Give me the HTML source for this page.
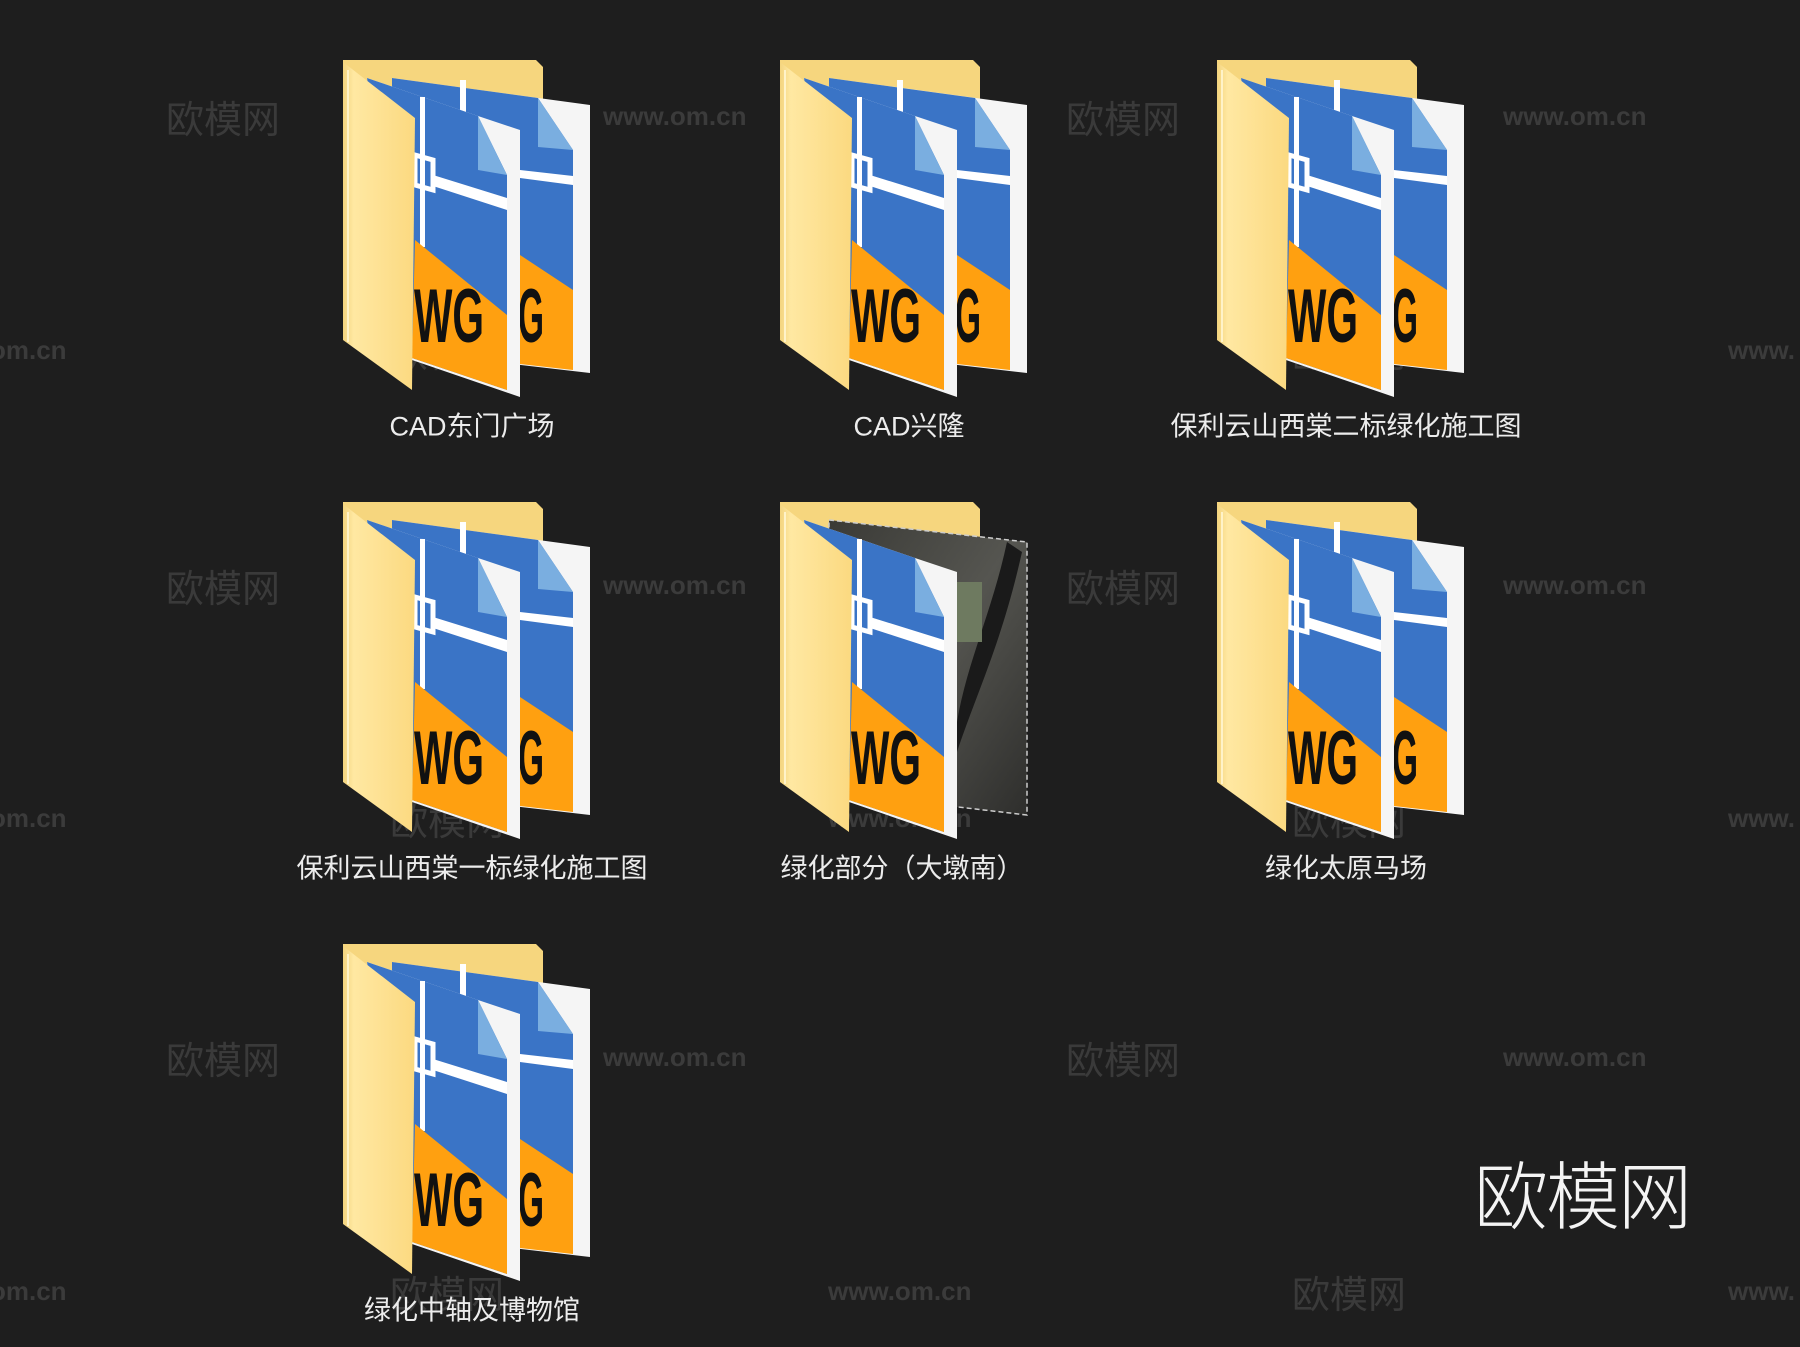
<!DOCTYPE html>
<html><head><meta charset="utf-8"><style>
html,body{margin:0;padding:0;background:#1e1e1e;}
body{width:1800px;height:1347px;position:relative;overflow:hidden;font-family:"Liberation Sans","Noto Sans CJK SC",sans-serif;}
.wm{position:absolute;color:#3a3a3a;font-family:"Noto Sans CJK SC",sans-serif;font-size:38px;line-height:1;white-space:nowrap;transform:translateY(-50%);}
.ww{position:absolute;color:#3b3b3b;font-family:"Liberation Sans",sans-serif;font-weight:bold;font-size:26px;line-height:1;white-space:nowrap;transform:translateY(-50%);}
.f{position:absolute;width:280px;height:400px;}
.lab{position:absolute;color:#ececec;font-family:"Liberation Sans","Noto Sans CJK SC",sans-serif;font-size:27px;line-height:1;white-space:nowrap;transform:translate(-50%,-50%);}
.big{position:absolute;left:1474px;top:1155px;color:#f4f4f4;font-family:"Noto Sans CJK SC",sans-serif;font-weight:300;font-size:74px;line-height:1;letter-spacing:-2px;}
</style></head><body>
<svg width="0" height="0" style="position:absolute">
<defs>
<linearGradient id="flap" x1="0" y1="0" x2="1" y2="0"><stop offset="0" stop-color="#f3d47e"/><stop offset="0.15" stop-color="#ffe8a2"/><stop offset="1" stop-color="#fbd980"/></linearGradient>
<linearGradient id="photo" x1="0" y1="0" x2="1" y2="1"><stop offset="0" stop-color="#3a3a36"/><stop offset="0.5" stop-color="#555550"/><stop offset="1" stop-color="#2e2e2c"/></linearGradient>
<symbol id="back" viewBox="0 0 280 400">
<polygon points="13,10 206,10 213,17 213,60 13,60" fill="#f6d67e"/>
</symbol>
<symbol id="backpaper" viewBox="0 0 280 400">
<polygon points="62,28 260,55 260,323 62,300" fill="#f5f5f5"/>
<polygon points="62,28 208,48 243,100 243,318 62,300" fill="#3a74c6"/>
<polygon points="208,48 243,100 208,97" fill="#7aaee0"/>
<polygon points="190,120 243,126 243,135 190,128" fill="#fff"/>
<polygon points="190,205 243,240 243,320 190,314" fill="#ffa010"/>
<text x="188" y="292" font-family="Liberation Sans" font-weight="bold" font-size="76" fill="#111" textLength="26" lengthAdjust="spacingAndGlyphs">G</text>
<rect x="130" y="30" width="6" height="40" fill="#fff"/>
</symbol>
<symbol id="front" viewBox="0 0 280 400">
<polygon points="37,28 148,66 190,80 190,347 82,310" fill="#f5f5f5"/>
<polygon points="37,28 148,66 177,125 177,340 82,308" fill="#3a74c6"/>
<polygon points="148,66 177,125 148,120" fill="#7aaee0"/>
<rect x="90" y="47" width="5" height="150" fill="#fff"/>
<polygon points="85,105 103,110 103,140 85,135" fill="none" stroke="#fff" stroke-width="5"/>
<polygon points="103,125 177,148 177,160 103,136" fill="#fff"/>
<polygon points="85,190 177,265 177,340 82,308" fill="#ffa010"/>
<text x="84" y="292" font-family="Liberation Sans" font-weight="bold" font-size="76" fill="#111" textLength="70" lengthAdjust="spacingAndGlyphs">WG</text>
<polygon points="13,12 85,68 82,340 13,290" fill="url(#flap)"/>
<line x1="18" y1="20" x2="18" y2="292" stroke="#fff3c8" stroke-width="2"/>
</symbol>
</defs>
</svg>

<div class="wm" style="left:166px;top:117px">欧模网</div>
<div class="ww" style="left:603px;top:116px">www.om.cn</div>
<div class="wm" style="left:1066px;top:117px">欧模网</div>
<div class="ww" style="left:1503px;top:116px">www.om.cn</div>
<div class="ww" style="left:-10px;top:350px">om.cn</div>
<div class="wm" style="left:390px;top:351px">欧模网</div>
<div class="ww" style="left:828px;top:350px">www.om.cn</div>
<div class="wm" style="left:1292px;top:351px">欧模网</div>
<div class="ww" style="left:1728px;top:350px">www.</div>
<div class="wm" style="left:166px;top:586px">欧模网</div>
<div class="ww" style="left:603px;top:585px">www.om.cn</div>
<div class="wm" style="left:1066px;top:586px">欧模网</div>
<div class="ww" style="left:1503px;top:585px">www.om.cn</div>
<div class="ww" style="left:-10px;top:818px">om.cn</div>
<div class="wm" style="left:390px;top:819px">欧模网</div>
<div class="ww" style="left:828px;top:818px">www.om.cn</div>
<div class="wm" style="left:1292px;top:819px">欧模网</div>
<div class="ww" style="left:1728px;top:818px">www.</div>
<div class="wm" style="left:166px;top:1058px">欧模网</div>
<div class="ww" style="left:603px;top:1057px">www.om.cn</div>
<div class="wm" style="left:1066px;top:1058px">欧模网</div>
<div class="ww" style="left:1503px;top:1057px">www.om.cn</div>
<div class="ww" style="left:-10px;top:1291px">om.cn</div>
<div class="wm" style="left:390px;top:1292px">欧模网</div>
<div class="ww" style="left:828px;top:1291px">www.om.cn</div>
<div class="wm" style="left:1292px;top:1292px">欧模网</div>
<div class="ww" style="left:1728px;top:1291px">www.</div>

<svg class="f" style="left:330px;top:50px" viewBox="0 0 280 400"><use href="#back"/><use href="#backpaper"/><use href="#front"/></svg>
<svg class="f" style="left:767px;top:50px" viewBox="0 0 280 400"><use href="#back"/><use href="#backpaper"/><use href="#front"/></svg>
<svg class="f" style="left:1204px;top:50px" viewBox="0 0 280 400"><use href="#back"/><use href="#backpaper"/><use href="#front"/></svg>
<svg class="f" style="left:330px;top:492px" viewBox="0 0 280 400"><use href="#back"/><use href="#backpaper"/><use href="#front"/></svg>
<svg class="f" style="left:767px;top:492px" viewBox="0 0 280 400">
<use href="#back"/>
<polygon points="62,28 260,50 260,323 62,300" fill="url(#photo)" stroke="#ccc" stroke-width="1.5" stroke-dasharray="5,3"/>
<path d="M240,50 C225,120 200,170 190,230 L190,260 C210,200 235,150 255,60 Z" fill="#1a1a1a"/>
<rect x="190" y="90" width="25" height="60" fill="#6e7a60"/>
<use href="#front"/></svg>
<svg class="f" style="left:1204px;top:492px" viewBox="0 0 280 400"><use href="#back"/><use href="#backpaper"/><use href="#front"/></svg>
<svg class="f" style="left:330px;top:934px" viewBox="0 0 280 400"><use href="#back"/><use href="#backpaper"/><use href="#front"/></svg>

<div class="lab" style="left:472px;top:427px">CAD东门广场</div>
<div class="lab" style="left:909px;top:427px">CAD兴隆</div>
<div class="lab" style="left:1346px;top:427px">保利云山西棠二标绿化施工图</div>
<div class="lab" style="left:472px;top:869px">保利云山西棠一标绿化施工图</div>
<div class="lab" style="left:902px;top:869px">绿化部分（大墩南）</div>
<div class="lab" style="left:1346px;top:869px">绿化太原马场</div>
<div class="lab" style="left:472px;top:1311px">绿化中轴及博物馆</div>

<div class="big">欧模网</div>
</body></html>
